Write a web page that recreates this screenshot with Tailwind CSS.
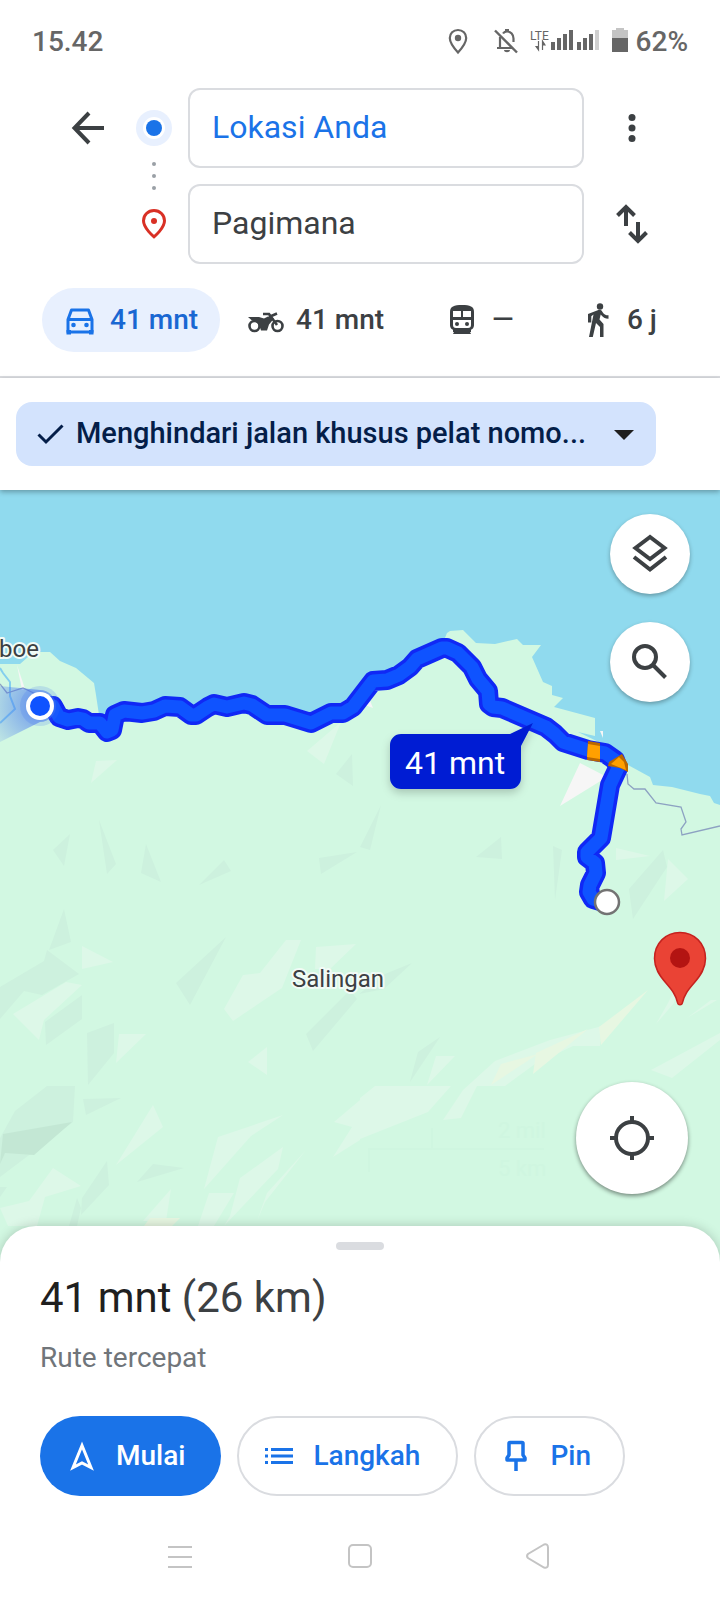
<!DOCTYPE html>
<html lang="id">
<head>
    <meta charset="UTF-8" />
    <meta name="viewport" content="width=device-width,initial-scale=1.0" />
    <title>Rute ke Pagimana</title>
    <script src="https://cdn.jsdelivr.net/npm/@tailwindcss/browser@4"></script>
</head>
<body class="min-h-screen flex flex-col bg-white text-[#3c4043] font-['Roboto',sans-serif]">

    <!-- Status bar -->
    <div class="flex items-center justify-between h-20 pt-1 pl-8 pr-8 text-[28px] leading-8 font-medium text-[#666666]">
        <span>15.42</span>
        <div class="flex items-center">
            <svg class="w-6 h-7 mr-6" viewBox="0 0 24 28" fill="none">
                <path d="M12 2c-4.800 0-8.200 3.500-8.200 8 0 5.500 8.200 14.500 8.200 14.500s8.200-9 8.200-14.500c0-4.500-3.400-8-8.200-8z" stroke="#666" stroke-width="2.200" />
                <circle cx="12" cy="10" r="3.200" fill="#666" />
            </svg>
            <svg class="w-6 h-7 mr-3" viewBox="0 0 24 28" fill="none">
                <path d="M6 9v10M3 20h16M9 5.500C10 4 11.500 3.500 13 3.500c3.800 0 6.500 3 6.500 7V14" stroke="#666" stroke-width="2.200" />
                <path d="M11 1h4v3h-4zM10 22h6c0 3-6 3-6 0z" fill="#666" />
                <path d="M1 2.500l22 22" stroke="#666" stroke-width="2.400" />
            </svg>
            <svg class="w-[70px] h-7 mr-3" viewBox="0 0 70 28">
                <text x="0" y="12" font-family="Roboto" font-size="12" font-weight="400" fill="#666">LTE</text>
                <path d="M8.500 13v9M6 18.500L8.500 22v-3.500zM12.500 22v-9M15 17l-2.500-4v4z" stroke="#666" stroke-width="1.200" fill="#666" />
                <path d="M21 14h4v8h-4zM27 10h4v12h-4zM33 6h4v16h-4zM39 2h4v20h-4zM47 14h4v8h-4zM53 10h4v12h-4zM59 6h4v16h-4z" fill="#666" />
                <path d="M65 2h4v20h-4z" fill="#d0d0d0" />
            </svg>
            <svg class="w-4 h-7 mr-2" viewBox="0 0 16 28">
                <path d="M0 2h4V0h8v2h4v9H0z" fill="#c4c4c4" />
                <path d="M0 10h16v14H0z" fill="#666" />
            </svg>
            <span>62%</span>
        </div>
    </div>

    <!-- Start and destination -->
    <div class="flex pt-2 pl-16">
        <button aria-label="Kembali" class="flex items-center justify-center w-12 h-20">
            <svg class="w-12 h-12" viewBox="0 0 48 48" fill="none" stroke="#3c4043" stroke-width="4">
                <path d="M40 24H11M25 9L10.500 24 25 39" />
            </svg>
        </button>
        <svg class="w-9 h-44 ml-6 mr-4" viewBox="0 0 36 176">
            <circle cx="18" cy="40" r="18" fill="#e8f0fe" />
            <circle cx="18" cy="40" r="11" fill="#fff" />
            <circle cx="18" cy="40" r="8" fill="#1a73e8" />
            <g fill="#9aa0a6">
                <circle cx="18" cy="76" r="2" /><circle cx="18" cy="88" r="2" /><circle cx="18" cy="100" r="2" />
            </g>
            <path d="M18 122.500c-6 0-10.500 4.500-10.500 10.300 0 7.500 10.500 16 10.500 16s10.500-8.500 10.500-16c0-5.800-4.500-10.300-10.500-10.300z" fill="none" stroke="#d93025" stroke-width="3" />
            <circle cx="18" cy="133" r="3" fill="#d93025" />
        </svg>
        <div class="flex-1 flex flex-col gap-4">
            <input type="text" aria-label="Titik awal" value="Lokasi Anda"
                   class="w-full h-20 px-[22px] pb-0.5 border-2 border-[#dadce0] rounded-xl text-[32px] text-[#1a73e8]" />
            <input type="text" aria-label="Tujuan" value="Pagimana"
                   class="w-full h-20 px-[22px] pb-0.5 border-2 border-[#dadce0] rounded-xl text-[32px]" />
        </div>
        <div class="flex flex-col gap-4 items-center w-[136px] pr-10">
            <button aria-label="Opsi lainnya" class="flex items-center justify-center w-12 h-20">
                <svg class="w-12 h-12" viewBox="0 0 48 48" fill="#3c4043">
                    <circle cx="24" cy="13.500" r="3.500" /><circle cx="24" cy="24" r="3.500" /><circle cx="24" cy="34.500" r="3.500" />
                </svg>
            </button>
            <button aria-label="Tukar titik awal dan tujuan" class="flex items-center justify-center w-12 h-20">
                <svg class="w-12 h-12" viewBox="0 0 48 48" fill="none" stroke="#3c4043" stroke-width="4">
                    <path d="M18 26V7M9.500 15.500L18 7l8.500 8.500M30 22v19M21.500 32.500L30 41l8.500-8.500" />
                </svg>
            </button>
        </div>
    </div>

    <!-- Travel modes -->
    <nav class="flex gap-2 mt-6 pl-[42px] pr-16 pb-6 border-b-2 border-[#dadce0] text-[28px] leading-8 font-medium whitespace-nowrap">
        <button class="flex items-center gap-1.5 w-[178px] h-16 pl-3.5 rounded-full bg-[#e8f0fe] text-[#1967d2]">
            <svg class="w-12 h-12 shrink-0" viewBox="0 0 48 48" fill="none">
                <path d="M12 23.500L15.500 14h17L36 23.500V36H12zM12 23.500h24" stroke="#1a73e8" stroke-width="3" stroke-linejoin="round" />
                <path d="M10.500 34h4.500v4.500h-4.500zM33 34h4.500v4.500H33z" fill="#1a73e8" />
                <circle cx="17.500" cy="29" r="2.300" fill="#1a73e8" /><circle cx="30.500" cy="29" r="2.300" fill="#1a73e8" />
            </svg>
            41 mnt
        </button>
        <button class="flex items-center gap-1.5 w-[188px] h-16 pl-3.5 rounded-full">
            <svg class="w-12 h-12 shrink-0" viewBox="0 0 48 48">
                <g fill="none" stroke="#3c4043" stroke-width="2.600">
                    <circle cx="12.500" cy="30" r="5" /><circle cx="35.500" cy="30" r="5" />
                    <path d="M21 18h6l8 11M27 21l8-3.500" />
                </g>
                <path d="M6 21h11l5 1.500 4-2 6 2-5 6-2 6h-6l-2-6-5-4H10z" fill="#3c4043" />
            </svg>
            41 mnt
        </button>
        <button class="flex items-center gap-1.5 w-[127px] h-16 pl-3.5 rounded-full">
            <svg class="w-12 h-12 shrink-0" viewBox="0 0 48 48">
                <path d="M24 9c-8 0-12 1.500-12 7v13c0 3 2 5 5 5l-2 4h18l-2-4c3 0 5-2 5-5V16c0-5.500-4-7-12-7z" fill="#3c4043" />
                <path d="M15 15h8v6h-8zM25 15h8v6h-8zM15 24h18v5c0 2-1 3-3 3H18c-2 0-3-1-3-3z" fill="#fff" />
                <circle cx="19" cy="28" r="2" fill="#3c4043" /><circle cx="29" cy="28" r="2" fill="#3c4043" />
                <path d="M15 33h18v3H15z" fill="#3c4043" />
            </svg>
            —
        </button>
        <button class="flex items-center gap-1.5 flex-1 h-16 pl-3.5 overflow-hidden">
            <svg class="w-12 h-12 shrink-0" viewBox="0 0 48 48" fill="#3c4043">
                <circle cx="27" cy="10.500" r="3.200" />
                <path d="M20.500 18.500L16 41h3.800l3.200-14 4 4v10h3.500V28l-4-4.500 1.200-5c2 2.800 4.500 4.200 7.800 4.200v-3.400c-2.800 0-4.800-1.300-6-3.400-1-1.800-2.600-2.600-4.800-1.600L15 18v8.500h3.300v-6.200z" />
            </svg>
            6 j
        </button>
    </nav>

    <!-- Route option -->
    <div class="relative z-10 pt-6 pb-6 pl-4 pr-16 bg-white shadow-[0_2px_5px_rgba(0,0,0,0.3)]">
        <div class="flex items-center h-16 pl-3 pr-5 rounded-2xl bg-[#d3e3fd] text-[#041e49]">
            <svg class="w-12 h-12 shrink-0" viewBox="0 0 48 48" fill="none">
                <path d="M10.500 24.500l7.500 7.500 16.500-16.500" stroke="#041e49" stroke-width="3" />
            </svg>
            <select aria-label="Opsi rute" class="flex-1 min-w-0 h-16 pb-0.5 appearance-none bg-transparent text-[29px] leading-8 font-medium">
                <option>Menghindari jalan khusus pelat nomo...</option>
            </select>
            <svg class="w-6 h-6 shrink-0" viewBox="0 0 24 24">
                <path d="M2 8h20L12 18z" fill="#1f1f1f" />
            </svg>
        </div>
    </div>

    <!-- Map -->
    <main class="relative flex-1 min-h-[600px] overflow-hidden bg-[#d2f8e2]">
        <svg class="absolute inset-0 w-full h-full" viewBox="0 490 720 776" preserveAspectRatio="xMidYMid slice">
            <defs>
                <radialGradient id="heading" gradientUnits="userSpaceOnUse" cx="40" cy="706" r="52">
                    <stop offset="0" stop-color="#3f6ff0" stop-opacity="0.700" />
                    <stop offset="1" stop-color="#3f6ff0" stop-opacity="0.150" />
                </radialGradient>
                <filter id="soft" x="-20%" y="-20%" width="140%" height="160%">
                    <feDropShadow dx="0" dy="4" stdDeviation="4" flood-color="#000" flood-opacity="0.200" />
                </filter>
            </defs>

            <!-- sea and land -->
            <rect y="490" width="720" height="776" fill="#d2f8e2" />
            <path d="M0 490H720V805L714 803 710 796 700 794 672 787 653 785 650 777 628 765 605 745 578 732 595 736V718L554 707 563 698 552 695V686L543 682 532 657 541 645H523L517 639 495 644 476 643 463 630 450 631 447 633 440 650 410 668 373 682 343 702 311 722 267 714 214 706 142 714 99 715 96 695 94 683 76 668 60 661 50 652H38L28 657 20 664H0z" fill="#90daee" />
            <path d="M0 668l3 5 7 9v14l5 13-15 14" fill="none" stroke="#84cfee" stroke-width="2" />
            <path d="M17 665l8 24-3 1z" fill="#f6f6f6" />
            <path d="M0 684l7 9 16-5 17 8M627 774l1 10 6 5h11l11 14 25 4 5 15-5 7 1 6 38-9" fill="none" stroke="#8da2c2" stroke-width="1.300" />

            <!-- terrain -->
            <g fill="#cdf1de">
                <path d="M70 834L53 850l11 16zM99 820l8 54 9-10zM146 844l-5 29 20 9zM224 860l7 11-32 14zM319 858l38-6-36 22zM352 754l-16 20 17 12zM381 805l-21 42 10 3zM501 837l-25 20 26 2zM553 846l9 4-7 50zM663 850l-34 39 4 30 34-52zM64 909l7 33-22 8zM47 950l32 24-37 21-18-4-24 28v-32l44-26zM82 995v24l-36 26-1-23zM226 937l-50 46 14 22zM114 1023v30l-26 32-1-52zM47 1086h28l-2 36-73 55v-39l15-27zM83 1099l38-1-35 17zM107 1161l2 24-28 30 1-17zM153 1164l31 4-47 14zM350 990l-44 44 7 17 44-52zM412 963l-27 11-26 20 25-5zM440 1037l-22 15-8 30zM77 1198l4 10-4 18h-8zM0 1187h7l-7 10z" />
            </g>
            <path d="M72 1122L3 1134l-3 30 5-11 29 2z" fill="#c3e7d4" />
            <g fill="#ddf8e8">
                <path d="M96 761l21-1-26 23zM341 722l-34 29 17 13zM82 946l31 16-31 7zM66 982l16 3-38 35-5 20-26-26zM119 1034h27l-30 29zM286 940h15l-19 48-49 33-9-12 19-34 17-2zM316 947l40-3-26 25h-15zM267 1047v28l-19-13zM153 1105l10 22-47 38zM283 1115l-65 22-14 52 47-53zM283 1147l-5 22-54 57 6-10 10-38zM306 1150l-41 52-8 19 10-28zM53 1168l28 18-36 11-8 29H8l-8-18 29-7zM209 1193h25l-20 33h-16zM171 1189l-5 32h-23zM616 848l34 8-34 4zM668 859l20 20-24 22zM375 1086h76l-23 26-68 27v-41zM360 1100l-26 22 18 5-19 30 27-17zM443 1120l20-30 32-29 55-21 30-8 22-6-2 20h-27l-38 18-30 22h-28l-16 32zM436 1056h19l-28 29zM720 1033l-69 37 21 8 48-38zM678 983l-10 20-12 21 18-21zM711 1000l-24 18 30-18z" />
            </g>
            <g fill="#e7f7e2">
                <path d="M648 990l-49 37 2 18zM588 1029l-52 24-3 21zM538 1054l-37 10-10 21zM150 1218h30l-8 8h-28z" />
            </g>
            <path d="M580 763l27 14-47 29zM369 698l4 10-8-3zM600 731h3v7z" fill="#f6f6f6" />

            <!-- scale -->
            <g fill="#cff6e0" font-family="Roboto" font-size="22">
                <path d="M368 1148h176v2H370v22h-2zM431 1128h2v20h-2z" />
                <text x="498" y="1138">2 mil</text>
                <text x="498" y="1176">5 km</text>
            </g>

            <!-- route -->
            <g fill="none" stroke-linejoin="round">
                <path d="M40 706L53 706 59 717 68 720 78 718 83 719 89 723 100 723 107 732 112 730 115 715 124 711 142 713 154 711 165 706 180 707 191 715 196 715 208 707 214 704 227 707 244 703 252 705 267 715 285 715 311 723 331 713 343 713 353 707 373 681 387 680 399 675 410 667 417 659 442 648 447 648 458 653 472 667 478 679 488 691 489 704 493 707 502 708 546 727 555 734 563 742 588 750 605 753 615 760 618 768 610 785 601 838 587 852 587 857 595 863 596 873 590 885 589 892 593 899 603 902" stroke="#1028f5" stroke-width="20" />
                <path d="M40 706L53 706 59 717 68 720 78 718 83 719 89 723 100 723 107 732 112 730 115 715 124 711 142 713 154 711 165 706 180 707 191 715 196 715 208 707 214 704 227 707 244 703 252 705 267 715 285 715 311 723 331 713 343 713 353 707 373 681 387 680 399 675 410 667 417 659 442 648 447 648 458 653 472 667 478 679 488 691 489 704 493 707 502 708 546 727 555 734 563 742 588 750 605 753 615 760 618 768 610 785 601 838 587 852 587 857 595 863 596 873 590 885 589 892 593 899 603 902" stroke="#0f53ff" stroke-width="13" />
            </g>
            <path d="M588 741l12 2v19l-13-2z" fill="#b96700" />
            <path d="M588 744l12 2v13l-13-2z" fill="#ffa000" />
            <path d="M622 754l6 10v8l-8-4-12-2 1-4z" fill="#b96700" />
            <path d="M619 757l5 5 2 8-15-6z" fill="#ffa000" />

            <!-- current position -->
            <path d="M0 686L40 690a16 16 0 0 1 0 32L0 742z" fill="url(#heading)" />
            <circle cx="40" cy="706" r="20" fill="#3f6ff0" fill-opacity="0.180" />
            <circle cx="40" cy="706" r="14" fill="#fff" />
            <circle cx="40" cy="706" r="10" fill="#0f53ff" />

            <!-- end of road and destination -->
            <circle cx="607" cy="902" r="12" fill="#fff" stroke="#737373" stroke-width="2.500" />
            <path d="M680 932.500c-14.500 0-25.500 11-25.500 26 0 10 5 17 11 24 7 8 10 12 12 20 .5 3 4.500 3 5 0 2-8 5-12 12-20 6-7 11-14 11-24 0-15-11-26-25.500-26z" fill="#ea4335" stroke="#c5221f" stroke-width="1.500" />
            <circle cx="680" cy="958" r="10" fill="#b31412" />

            <!-- route time -->
            <path d="M401 734h109l23-11-12 23v32a11 11 0 0 1-11 11H401a11 11 0 0 1-11-11v-33a11 11 0 0 1 11-11z" fill="#051fd3" filter="url(#soft)" />
            <text x="405" y="774" font-family="Roboto" font-size="32" fill="#fff">41 mnt</text>

            <!-- places -->
            <g font-family="Roboto" font-size="24" fill="#3c4043" stroke="#f1fbf6" stroke-width="4" stroke-linejoin="round" paint-order="stroke">
                <text x="-1" y="657">boe</text>
                <text x="292" y="987">Salingan</text>
            </g>
        </svg>

        <div class="absolute top-6 right-[30px] flex flex-col gap-7">
            <button aria-label="Lapisan peta" class="flex items-center justify-center w-20 h-20 rounded-full bg-white shadow-[0_2px_4px_rgba(0,0,0,0.3)]">
                <svg class="w-12 h-12" viewBox="0 0 48 48" fill="none" stroke="#3c4043" stroke-width="4">
                    <path d="M24 7L9.500 18 24 29l14.500-11zM8 27l16 12.500L40 27" />
                </svg>
            </button>
            <button aria-label="Telusuri di peta" class="flex items-center justify-center w-20 h-20 rounded-full bg-white shadow-[0_2px_4px_rgba(0,0,0,0.3)]">
                <svg class="w-12 h-12" viewBox="0 0 48 48" fill="none" stroke="#3c4043" stroke-width="4">
                    <circle cx="19" cy="19" r="11" />
                    <path d="M27 27l12.500 12.500" />
                </svg>
            </button>
        </div>
        <button aria-label="Lokasi saya" class="absolute bottom-[72px] right-8 flex items-center justify-center w-28 h-28 rounded-full bg-white shadow-[0_2px_4px_rgba(0,0,0,0.45)]">
            <svg class="w-12 h-12" viewBox="0 0 48 48" fill="none" stroke="#3c4043" stroke-width="4">
                <circle cx="24" cy="24" r="16" />
                <path d="M24 2v6M24 40v6M2 24h6M40 24h6" />
            </svg>
        </button>
    </main>

    <!-- Route summary -->
    <section class="relative -mt-10 px-10 pt-4 pb-6 rounded-t-[36px] bg-white shadow-[0_0_12px_rgba(0,0,0,0.2)]">
        <div class="w-12 h-2 mx-auto rounded-full bg-[#dadce0]"></div>
        <h1 class="mt-6 text-[42px] leading-12"><span class="text-[#1f1f1f]">41 mnt</span> (26 km)</h1>
        <p class="mt-5 text-[28px] leading-8 text-[#70757a]">Rute tercepat</p>
        <div class="flex gap-4 mt-[42px] text-[28px] leading-8 font-medium text-[#1a73e8]">
            <button class="flex items-center gap-2.5 h-20 pl-[18px] pr-9 rounded-full bg-[#1a73e8] text-white">
                <svg class="w-12 h-12" viewBox="0 0 48 48" fill="none" stroke="#fff" stroke-width="3">
                    <path d="M24 13.500L15 35.500l9-4.500 9 4.500z" />
                </svg>
                Mulai
            </button>
            <button class="flex items-center gap-2.5 h-20 pl-4 pr-9 rounded-full border-2 border-[#dadce0]">
                <svg class="w-12 h-12" viewBox="0 0 48 48" fill="none" stroke="#1a73e8" stroke-width="3">
                    <path d="M16 17.500h22M16 24h22M16 30.500h22M10 17.500h3M10 24h3M10 30.500h3" />
                </svg>
                Langkah
            </button>
            <button class="flex items-center gap-2.5 h-20 pl-4 pr-8 rounded-full border-2 border-[#dadce0]">
                <svg class="w-12 h-12" viewBox="0 0 48 48" fill="none" stroke="#1a73e8" stroke-width="3.500" stroke-linejoin="round">
                    <path d="M18 10.500h12q1 0 1 1V23l2 3v2H15v-2l2-3V11.500q0-1 1-1zM24 28v11" />
                </svg>
                Pin
            </button>
        </div>
    </section>

    <!-- System navigation -->
    <nav class="relative grid grid-cols-3 items-center h-20 px-[12.5%] pb-2 bg-white">
        <button aria-label="Aplikasi terbaru" class="flex justify-center">
            <svg class="w-7 h-7" viewBox="0 0 28 28" stroke="#c4c4c4" stroke-width="2"><path d="M2 5h24M2 15h24M2 25h24" /></svg>
        </button>
        <button aria-label="Beranda" class="flex justify-center">
            <svg class="w-7 h-7" viewBox="0 0 28 28" fill="none" stroke="#c4c4c4" stroke-width="2"><rect x="3" y="3" width="22" height="22" rx="4" /></svg>
        </button>
        <button aria-label="Kembali" class="flex justify-center">
            <svg class="w-7 h-7" viewBox="0 0 28 28" fill="none" stroke="#c4c4c4" stroke-width="2"><path d="M18 2.500L2 12q-2 2 0 4l16 9.500q4 1 4-3V5.500q0-4-4-3z" /></svg>
        </button>
    </nav>
</body>
</html>
